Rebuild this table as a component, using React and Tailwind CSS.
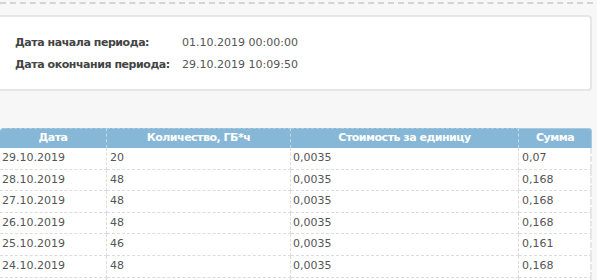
export default function App() {
  const rows = [
    ["29.10.2019", "20", "0,0035", "0,07"],
    ["28.10.2019", "48", "0,0035", "0,168"],
    ["27.10.2019", "48", "0,0035", "0,168"],
    ["26.10.2019", "48", "0,0035", "0,168"],
    ["25.10.2019", "46", "0,0035", "0,161"],
    ["24.10.2019", "48", "0,0035", "0,168"],
    ["", "", "", ""],
  ];
  const cell = "border-b border-r border-dashed border-[#dcdcdc] px-[3px] text-left font-normal";
  return (
    <div className="w-[597px] h-[280px] overflow-hidden bg-[#f7f7f7] text-[11px] text-[#555]" style={{ fontFamily: '"DejaVu Sans", Verdana, sans-serif' }}>
      <div className="pt-[2px] pr-[4px]">
        <div className="border-t-2 border-dashed border-[#d4d4d4]" />
      </div>
      <div className="pt-[11px] pr-[5px]">
        <div className="-ml-2 h-[76px] rounded-[4px] border-2 border-[#e6e6e6] bg-white pl-[21px] pt-[15px]">
          <div className="flex h-[22px] items-center">
            <div className="w-[167px] font-bold tracking-[-0.45px] text-[#444]">Дата начала периода:</div>
            <div>01.10.2019 00:00:00</div>
          </div>
          <div className="flex h-[22px] items-center">
            <div className="w-[167px] font-bold tracking-[-0.45px] text-[#444]">Дата окончания периода:</div>
            <div>29.10.2019 10:09:50</div>
          </div>
        </div>
      </div>
      <div className="pt-[37px] pr-[5px]">
        <table className="w-[592px] border-separate border-spacing-0 table-fixed">
          <colgroup>
            <col className="w-[107px]" />
            <col className="w-[184px]" />
            <col className="w-[228px]" />
            <col className="w-[73px]" />
          </colgroup>
          <thead>
            <tr className="h-[20px] bg-[#86b7d7] text-white font-bold tracking-[-0.5px]">
              <th className="rounded-tl-[4px] border-r border-dashed border-[#c5dcec] border-t border-t-[#a9cbe2] text-center">Дата</th>
              <th className="border-r border-dashed border-[#c5dcec] border-t border-t-[#a9cbe2] text-center">Количество, ГБ*ч</th>
              <th className="border-r border-dashed border-[#c5dcec] border-t border-t-[#a9cbe2] text-center">Стоимость за единицу</th>
              <th className="rounded-tr-[4px] border-t border-r border-[#a9cbe2] text-center">Сумма</th>
            </tr>
          </thead>
          <tbody className="bg-white">
            {rows.map((r, i) => (
              <tr key={i} className="h-[21.6px]">
                <td className={cell + " pl-[2px]"}>{r[0]}</td>
                <td className={cell}>{r[1]}</td>
                <td className={cell + " pl-[2px]"}>{r[2]}</td>
                <td className="border-b border-dashed border-[#dcdcdc] border-r-2 border-r-[#e6e6e6] border-r-solid px-[3px]">{r[3]}</td>
              </tr>
            ))}
          </tbody>
        </table>
      </div>
    </div>
  );
}
